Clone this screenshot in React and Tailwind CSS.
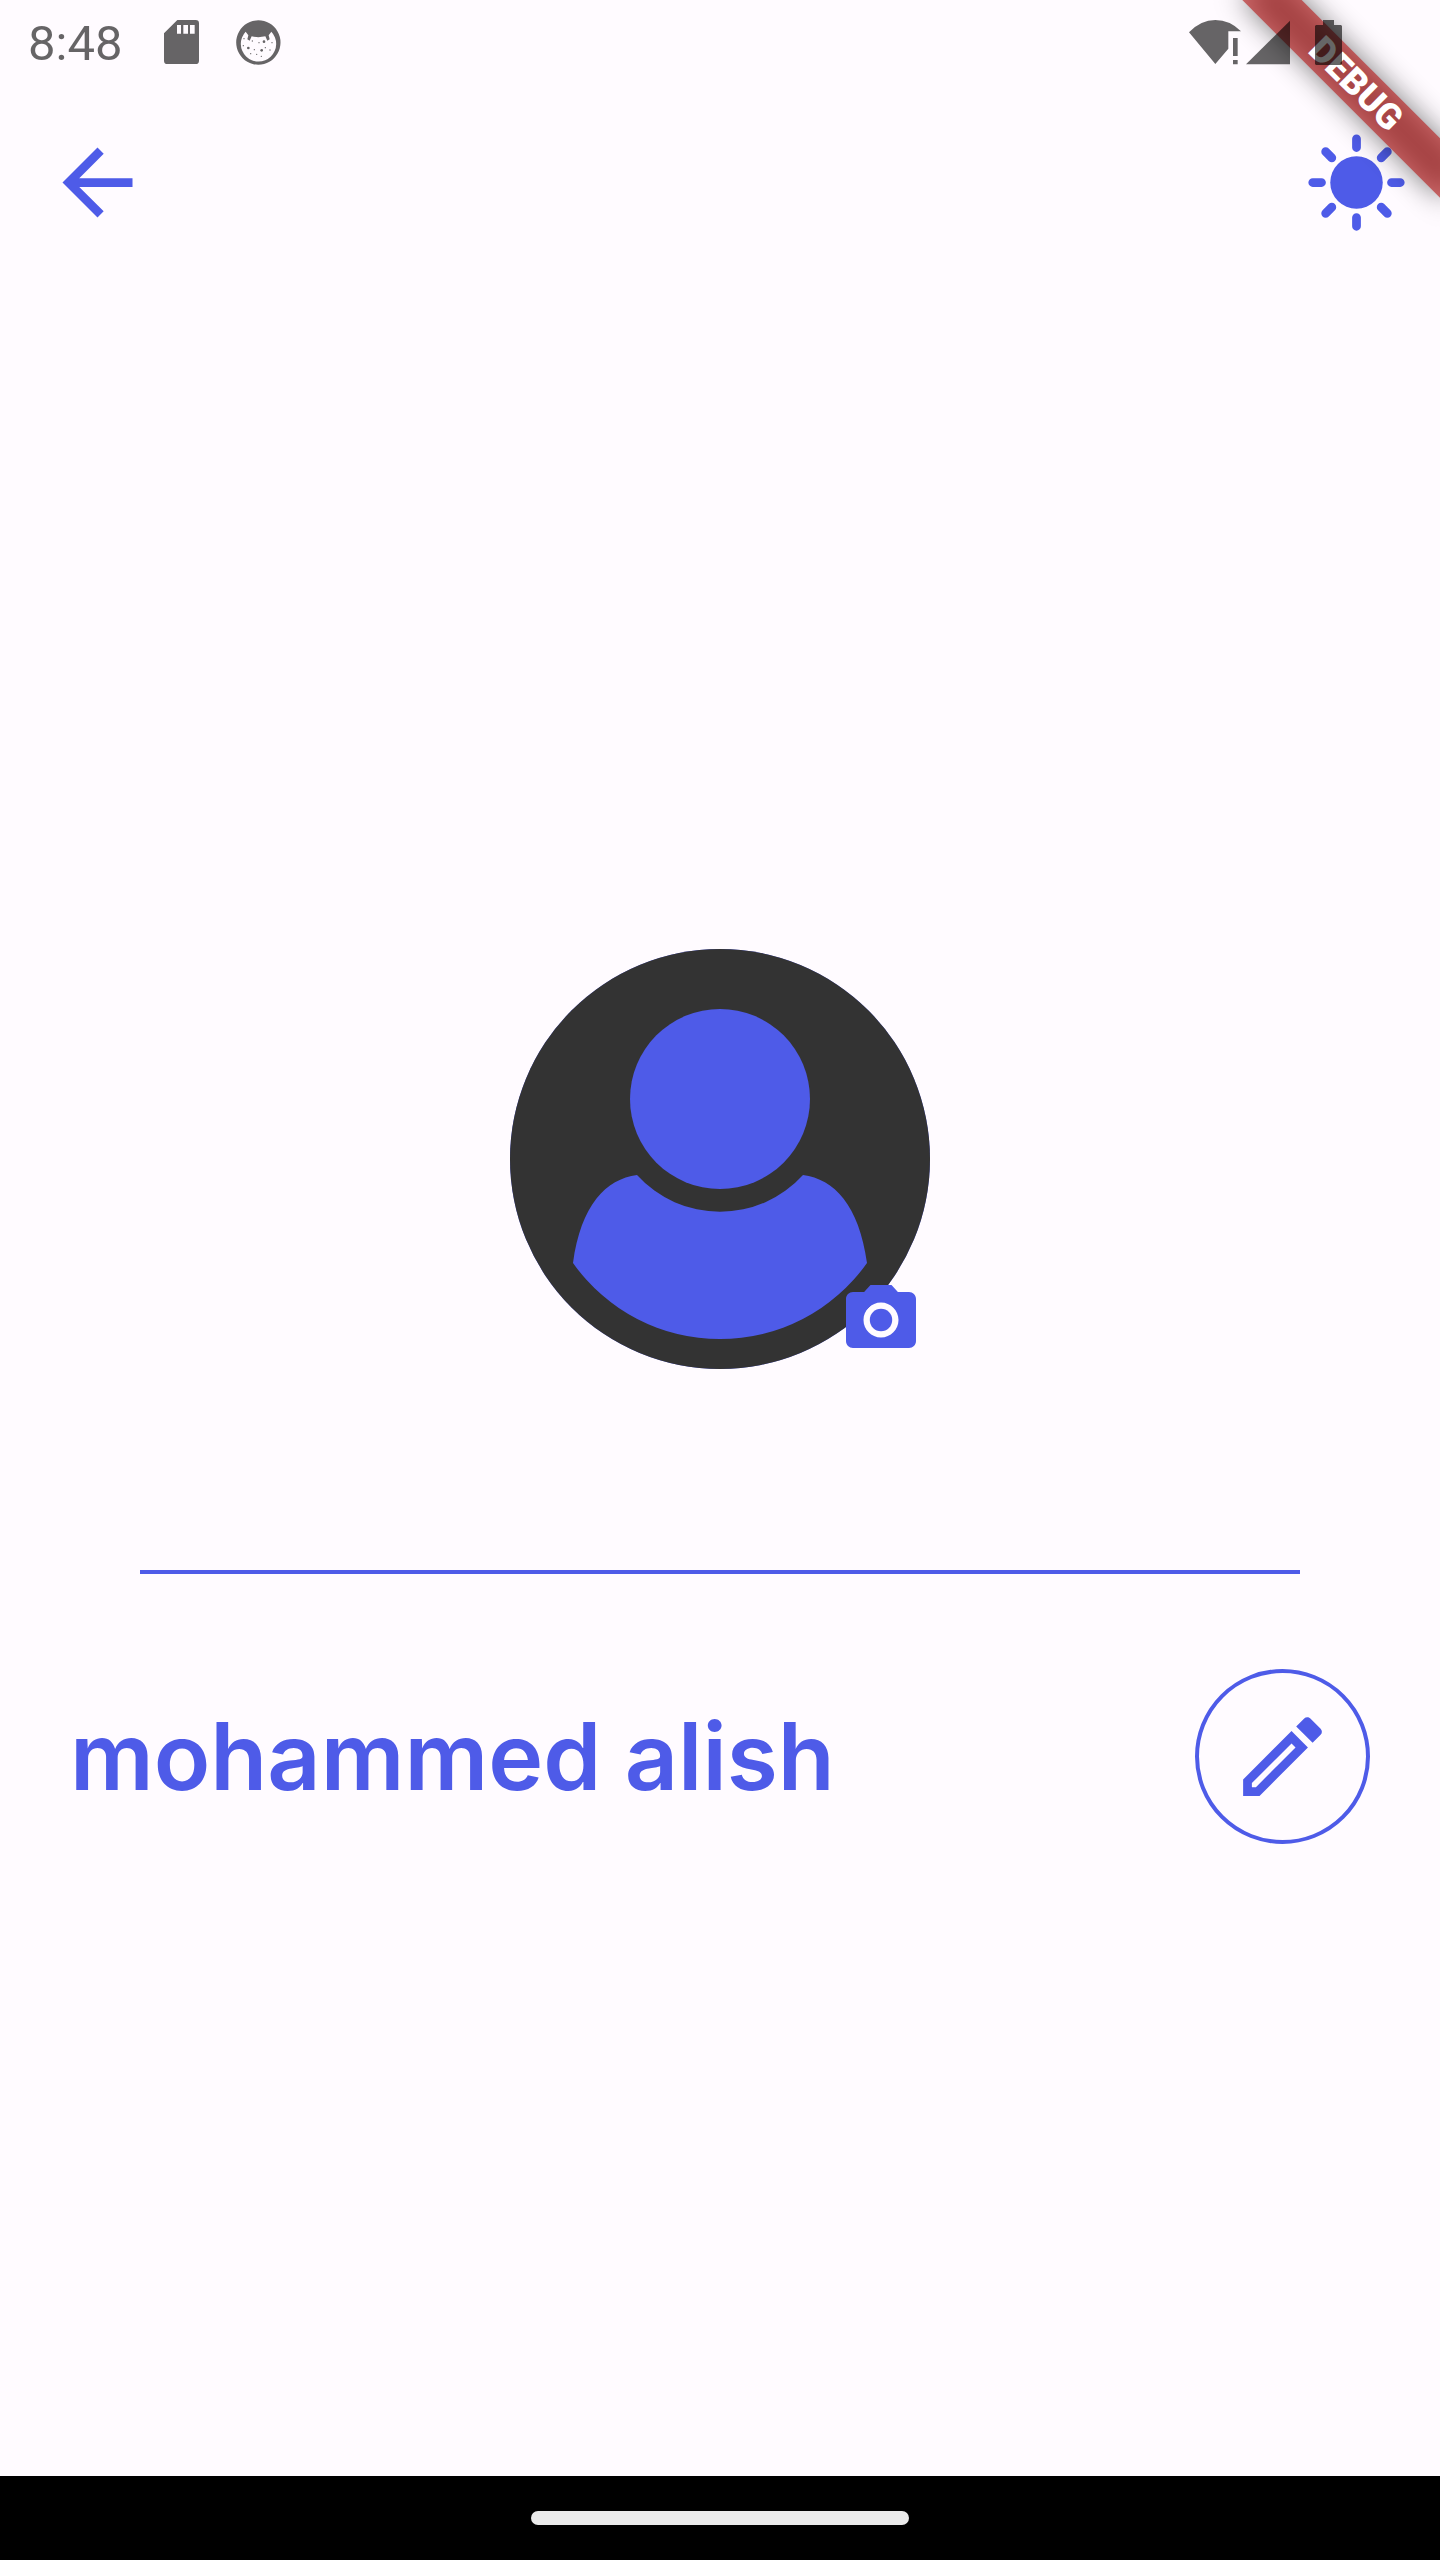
import { MdArrowBack, MdCameraAlt, MdOutlineEdit } from "react-icons/md";

function SdCardIcon() {
  return (
    <svg viewBox="0 0 105 132" className="h-11 w-[35px]" fill="currentColor" aria-hidden="true">
      <path
        fillRule="evenodd"
        d="M40 0H95Q105 0 105 10V122Q105 132 95 132H10Q0 132 0 122V40ZM39 15V41H51V15ZM58 15V41H72V15ZM78 15V41H92V15Z"
      />
    </svg>
  );
}

const SPECKLES = [
  [24, 56, 2], [49, 63, 2], [84, 65, 4], [69, 68, 2], [108, 68, 2], [22, 77, 2], [37, 84, 4],
  [55, 89, 2], [77, 91, 4], [88, 83, 2], [102, 90, 2], [44, 101, 2], [62, 103, 2], [76, 109, 2],
];

function FaceIcon() {
  return (
    <svg viewBox="0 0 135 135" className="size-[45px]" fill="currentColor" aria-hidden="true">
      <path
        fillRule="evenodd"
        d="M67 1A66.500 66.500 0 1 0 67.100 1ZM29 35L37 46L34 58L41 62L47 49Q67 54 88 49L94 62L101 58L98 46L106 35A53 53 0 1 1 29 35Z"
      />
      {SPECKLES.map(([x, y, r]) => (
        <circle key={x + "-" + y} cx={x} cy={y} r={r} />
      ))}
    </svg>
  );
}

function WifiIcon() {
  return (
    <svg viewBox="84 57 156 135" className="h-[45px] w-[52px]" fill="currentColor" aria-hidden="true">
      <path d="M84 94Q119 57 163 57T240 91H202V143L163 189Z" />
      <path d="M216 111H230V165H216ZM216 177H230V190H216Z" />
    </svg>
  );
}

function SignalIcon() {
  return (
    <svg viewBox="0 0 132 135" className="h-[45px] w-11" fill="currentColor" aria-hidden="true">
      <path d="M132 2V133H0Z" />
    </svg>
  );
}

function BatteryIcon() {
  return (
    <svg viewBox="0 0 81 135" className="h-[45px] w-[27px]" fill="currentColor" aria-hidden="true">
      <path d="M24 0H57V15H78L81 18V132L78 135H3L0 132V18L3 15H24Z" />
    </svg>
  );
}

function SunIcon() {
  return (
    <svg viewBox="0 0 24 24" className="size-[105px]" aria-hidden="true">
      <circle cx="12" cy="12" r="6" fill="currentColor" />
      <path
        d="M12 2V4M12 20V22M2 12H4M20 12H22M4.95 4.95L6.36 6.36M17.64 17.64L19.05 19.05M4.95 19.05L6.36 17.64M17.64 6.36L19.05 4.95"
        stroke="currentColor"
        strokeWidth="2"
        strokeLinecap="round"
        fill="none"
      />
    </svg>
  );
}

function StatusBar() {
  return (
    <div className="relative z-20 flex h-[84px] items-center justify-between pr-[98px] pl-7 text-black/60">
      <div className="flex items-center">
        <span className="pt-1 text-[49px] leading-[56px]">8:48</span>
        <span className="ml-[42px] flex items-center gap-[37px]">
          <SdCardIcon />
          <FaceIcon />
        </span>
      </div>
      <div className="flex items-center">
        <WifiIcon />
        <span className="ml-[5px]">
          <SignalIcon />
        </span>
        <span className="ml-[25px]">
          <BatteryIcon />
        </span>
      </div>
    </div>
  );
}

function DebugBanner() {
  return (
    <div className="pointer-events-none absolute top-[63px] -right-14 z-10 h-[42px] w-[280px] rotate-45">
      <div className="absolute inset-0 bg-black/50 blur-[14px]" />
      <div className="relative flex h-full items-center justify-center bg-[#b71c1c]/63 text-[36px] leading-none font-black text-white">
        DEBUG
      </div>
    </div>
  );
}

function Avatar() {
  return (
    <div className="relative size-[420px] rounded-full bg-[#4e5be8]">
      <svg viewBox="0 0 420 420" className="size-full" role="img" aria-label="Profile picture">
        <circle cx="210" cy="210" r="210" fill="#333333" />
        <circle cx="210" cy="150" r="90" fill="#4e5be8" />
        <path
          d="M127 226A112 112 0 0 0 293 226C324 230 349 256 357 314A180 180 0 0 1 63 314C71 256 96 230 127 226Z"
          fill="#4e5be8"
        />
      </svg>
      <button type="button" aria-label="Change picture" className="absolute right-[7px] bottom-[7px]">
        <MdCameraAlt className="size-[84px]" />
      </button>
    </div>
  );
}

export default function App() {
  return (
    <div className="relative flex min-h-screen flex-col overflow-hidden bg-[#fffbff] font-['Roboto',sans-serif] text-[#4e5be8]">
      <StatusBar />
      <DebugBanner />
      <header className="flex h-[196px] items-center justify-between pr-[31px] pl-[45px]">
        <button type="button" aria-label="Back">
          <MdArrowBack className="size-[105px]" />
        </button>
        <button type="button" aria-label="Switch theme">
          <SunIcon />
        </button>
      </header>
      <main className="flex flex-1 flex-col items-center justify-center pt-9">
        <Avatar />
        <hr className="mt-[201px] h-1 w-full max-w-[1160px] border-0 bg-[#4e5be8]" />
        <div className="mt-[95px] flex w-full items-center justify-between px-[70px]">
          <h1 className="font-['Inter',sans-serif] text-[93px] leading-[120px] font-semibold">mohammed alish</h1>
          <button
            type="button"
            aria-label="Edit name"
            className="flex size-[175px] items-center justify-center rounded-full border-4 border-[#4e5be8]"
          >
            <MdOutlineEdit className="size-[105px]" />
          </button>
        </div>
      </main>
      <footer className="flex h-[84px] items-center justify-center bg-black">
        <div className="h-3.5 w-[378px] rounded-full bg-[#ebebeb]" />
      </footer>
    </div>
  );
}
